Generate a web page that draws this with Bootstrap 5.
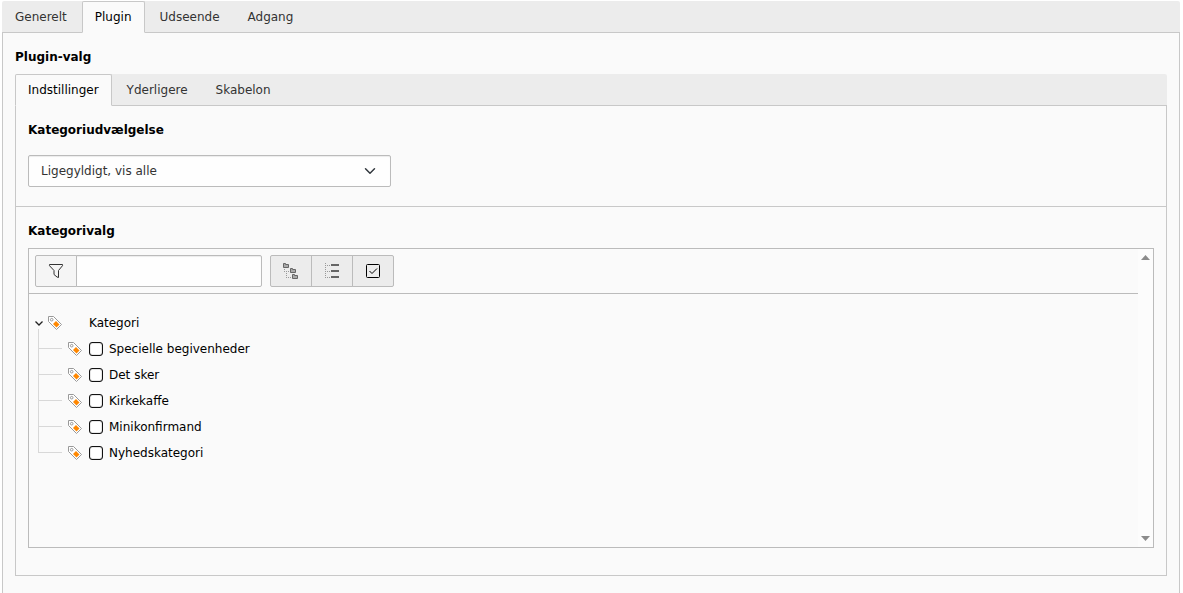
<!DOCTYPE html>
<html lang="da">
<head>
<meta charset="utf-8">
<meta name="viewport" content="width=device-width, initial-scale=1">
<title>Plugin-valg</title>
<link href="https://cdn.jsdelivr.net/npm/bootstrap@5.3.0/dist/css/bootstrap.min.css" rel="stylesheet">
<style>
  body { font: 12px/18px Verdana, "DejaVu Sans", sans-serif; color: #000; background: #fff; padding: 1px 3px 0 2px; }
  .panel-tabs { background: #ececec; border-bottom: 1px solid #c8c8c8; border-radius: 2px 2px 0 0; gap: 2px; }
  .panel-tabs .nav-link { color: #333; padding: 6px 12px; border-radius: 2px 2px 0 0; line-height: 18px; }
  .panel-tabs .nav-link:hover { border-color: transparent; color: #000; }
  .panel-tabs .nav-link.active { color: #000; background: #fafafa; border-color: #c8c8c8 #c8c8c8 #fafafa; }
  .panel-body { background: #fafafa; border: 1px solid #c8c8c8; border-top: 0; }
  .outer-body { border-bottom: 0; padding: 15px 12px 17px; }
  .section-title { font-size: 12px; line-height: 18px; font-weight: bold; margin: 0; }
  .field { padding: 15px 12px 19px; }
  .field + .field { border-top: 1px solid #c8c8c8; padding-bottom: 27px; }
  .mode-select { font-size: 12px; line-height: 18px; max-width: 363px; height: 32px; padding: 6px 32px 6px 12px; color: #333;
    border: 1px solid #bbb; border-radius: 2px; background-color: #fefefe; background-position: right 14px center; background-size: 12px 12px;
    box-shadow: inset 0 1px 1px rgba(0,0,0,.075); }
  .tree-box { border: 1px solid #bbb; height: 300px; }
  .tree-tools { border-bottom: 1px solid #bbb; padding: 6px; gap: 8px; }
  .filter-group { width: 227px; }
  .filter-group .input-group-text { width: 42px; padding: 0; background: #f5f5f5; border-color: #bbb; border-radius: 2px; }
  .filter-group .form-control { height: 32px; font-size: 12px; border-color: #bbb; border-radius: 2px; background: #fefefe; box-shadow: inset 0 1px 1px rgba(0,0,0,.075); }
  .tool-btn { width: 42px; height: 32px; padding: 0; background: #ececec; border: 1px solid #bbb; border-radius: 2px; display: flex; align-items: center; justify-content: center; }
  .tree { padding: 16px 6px 0; }
  .tree-row { height: 26px; }
  .tree-toggle { width: 9px; height: 26px; padding: 0; border: 0; background: none; display: flex; }
  .root-name { margin-left: 27px; }
  .branches { margin-left: 3px; }
  .guide { width: 24px; height: 26px; border-left: 1px solid #d8d8d8; background: linear-gradient(#d8d8d8, #d8d8d8) 0 12px / 100% 1px no-repeat; margin-right: 6px; }
  .branches li:last-child .guide { height: 13px; }
  .tree-check { appearance: none; width: 14px; height: 14px; margin: 0 6px 0 7px; border: 1px solid #111; border-radius: 3px; background: #fff; box-shadow: inset 0 0 1px #111; }
  .tree-check:checked { background: #333; }
  .scroll-rail { width: 15px; background: #fcfcfc; padding: 6px 0; }
</style>
</head>
<body class="d-flex flex-column min-vh-100">
<svg class="d-none" aria-hidden="true">
  <symbol id="tag" viewBox="0 0 14 14">
    <path d="M.5.5h5l8 8-5 5-8-8z" fill="#fff" stroke="#999"/>
    <circle cx="3.700" cy="3.700" r="1.300" fill="#fff" stroke="#999"/>
    <path d="M8 5l3.500 3.500-3 3L5 8z" fill="#ff8700"/>
  </symbol>
</svg>

<ul class="nav nav-tabs panel-tabs">
  <li class="nav-item"><a class="nav-link" href="#">Generelt</a></li>
  <li class="nav-item"><a class="nav-link active" aria-current="page" href="#">Plugin</a></li>
  <li class="nav-item"><a class="nav-link" href="#">Udseende</a></li>
  <li class="nav-item"><a class="nav-link" href="#">Adgang</a></li>
</ul>

<main class="panel-body outer-body flex-grow-1">
  <h1 class="section-title pb-2">Plugin-valg</h1>
  <ul class="nav nav-tabs panel-tabs">
    <li class="nav-item"><a class="nav-link active" aria-current="page" href="#">Indstillinger</a></li>
    <li class="nav-item"><a class="nav-link" href="#">Yderligere</a></li>
    <li class="nav-item"><a class="nav-link" href="#">Skabelon</a></li>
  </ul>

  <div class="panel-body">
    <section class="field">
      <label class="section-title d-block pb-3" for="mode">Kategoriudvælgelse</label>
      <select class="form-select mode-select" id="mode"><option>Ligegyldigt, vis alle</option></select>
    </section>

    <section class="field">
      <h2 class="section-title pb-2">Kategorivalg</h2>
      <div class="tree-box d-flex">
        <div class="flex-grow-1">
          <div class="tree-tools d-flex">
            <div class="input-group filter-group">
              <label class="input-group-text justify-content-center" for="filter">
                <svg width="16" height="16" viewBox="0 0 16 16" fill="none" stroke="#333" role="img" aria-label="Filter"><path d="M1.500 1.500h13v1.200l-4 4.800v7L9 14l-3-2.500v-4l-4.500-4.800z"/></svg>
              </label>
              <input type="text" class="form-control" id="filter">
            </div>
            <div class="btn-group" role="group">
              <button type="button" class="btn tool-btn" aria-label="Udvid alle">
                <svg width="16" height="16" viewBox="0 0 16 16"><path d="M.5.5h2v1h3v3h-5zM7.500 5.500h2v1h3v3h-5zM9.500 11.500h2v1h3v3h-5z" fill="#aaa" stroke="#666"/><path d="M1 6h1v1H1zM1 8h1v1H1zM3 8h1v1H3zM5 8h1v1H5zM3 10h1v1H3zM3 12h1v1H3zM3 14h1v1H3zM5 14h1v1H5zM7 14h1v1H7z" fill="#999"/></svg>
              </button>
              <button type="button" class="btn tool-btn" aria-label="Fold alle sammen">
                <svg width="16" height="16" viewBox="0 0 16 16"><path d="M7 1h8v2H7zM7 7h8v2H7zM7 13h8v2H7z" fill="#666"/><path d="M1.500 0v16M3 2.500h4M3 8.500h4M3 14.500h4" stroke="#999" stroke-dasharray="1 1"/></svg>
              </button>
              <button type="button" class="btn tool-btn" aria-label="Vis valgte">
                <svg width="16" height="16" viewBox="0 0 16 16" fill="none" stroke="#000"><rect x="1.500" y="1.500" width="13" height="13" rx="1"/><path d="M4.500 8l2.500 2.500 5-5"/></svg>
              </button>
            </div>
          </div>

          <div class="tree">
            <div class="tree-row d-flex align-items-center">
              <button type="button" class="tree-toggle" aria-label="Fold Kategori sammen">
                <svg width="9" height="26" viewBox="0 0 9 26" fill="none"><path d="M3.500 19v7" stroke="#d8d8d8"/><path d="M.5 11.500l3.500 3.500 3.500-3.500" stroke="#222" stroke-width="1.300"/></svg>
              </button>
              <svg width="14" height="14" class="ms-1" aria-hidden="true"><use href="#tag"/></svg>
              <span class="root-name">Kategori</span>
            </div>
            <ul class="list-unstyled branches mb-0">
              <li class="tree-row d-flex"><span class="guide"></span><label class="d-flex align-items-center"><svg width="14" height="14" aria-hidden="true"><use href="#tag"/></svg><input class="tree-check" type="checkbox">Specielle begivenheder</label></li>
              <li class="tree-row d-flex"><span class="guide"></span><label class="d-flex align-items-center"><svg width="14" height="14" aria-hidden="true"><use href="#tag"/></svg><input class="tree-check" type="checkbox">Det sker</label></li>
              <li class="tree-row d-flex"><span class="guide"></span><label class="d-flex align-items-center"><svg width="14" height="14" aria-hidden="true"><use href="#tag"/></svg><input class="tree-check" type="checkbox">Kirkekaffe</label></li>
              <li class="tree-row d-flex"><span class="guide"></span><label class="d-flex align-items-center"><svg width="14" height="14" aria-hidden="true"><use href="#tag"/></svg><input class="tree-check" type="checkbox">Minikonfirmand</label></li>
              <li class="tree-row d-flex"><span class="guide"></span><label class="d-flex align-items-center"><svg width="14" height="14" aria-hidden="true"><use href="#tag"/></svg><input class="tree-check" type="checkbox">Nyhedskategori</label></li>
            </ul>
          </div>
        </div>
        <div class="scroll-rail d-flex flex-column justify-content-between align-items-center" aria-hidden="true">
          <svg width="9" height="5" viewBox="0 0 9 5"><path d="M0 5l4.500-5L9 5z" fill="#8b8b8b"/></svg>
          <svg width="9" height="5" viewBox="0 0 9 5"><path d="M0 0l4.500 5L9 0z" fill="#8b8b8b"/></svg>
        </div>
      </div>
    </section>
  </div>
</main>
<script src="https://cdn.jsdelivr.net/npm/bootstrap@5.3.0/dist/js/bootstrap.bundle.min.js"></script>
</body>
</html>
